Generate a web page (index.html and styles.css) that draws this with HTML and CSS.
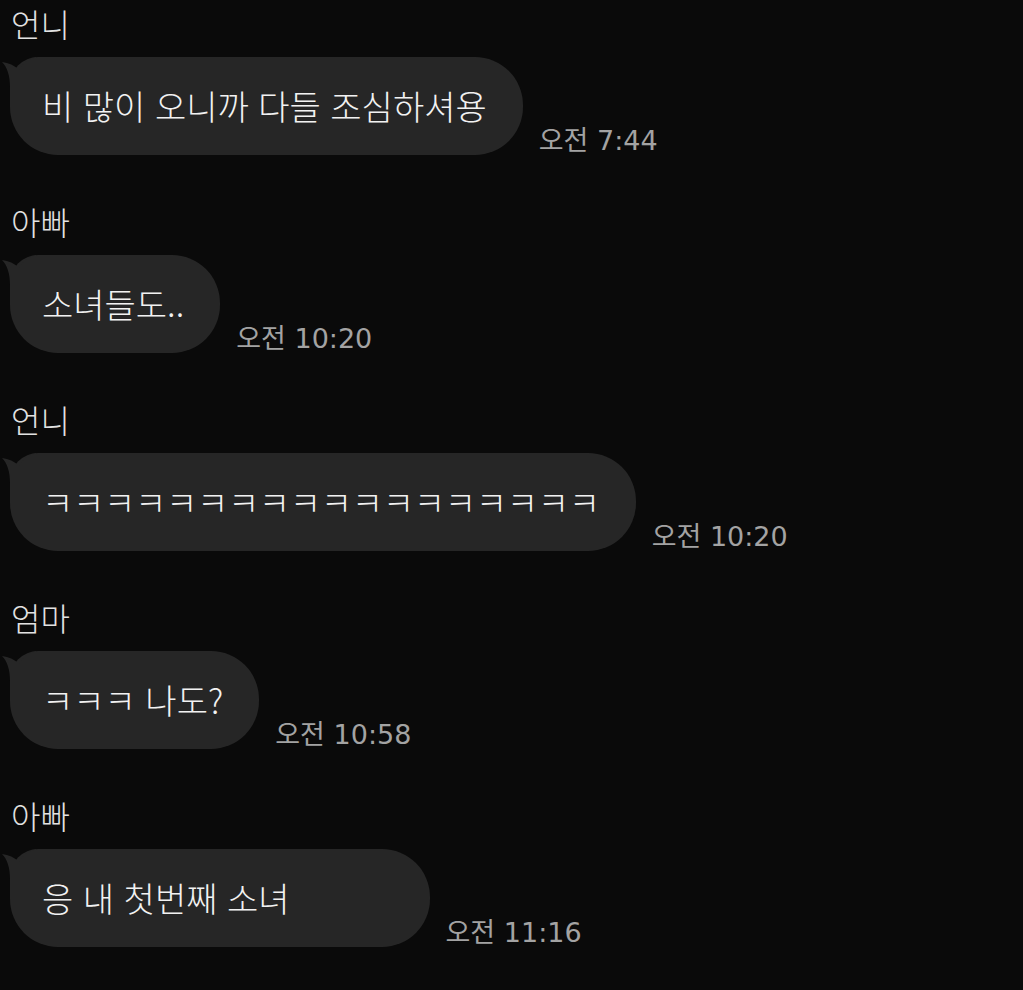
FILE: index.html
```html
<!DOCTYPE html>
<html lang="ko">
<head>
    <meta charset="UTF-8">
    <title>단톡방</title>
    <link rel="stylesheet" href="styles.css">
</head>
<body>

<div class="chat">
    <div class="msg">
        <div class="name">언니</div>
        <div class="row">
            <div class="bubble">
                <svg class="tail" viewBox="-8 0 34 30"><path d="M-8 5 Q2 6 9 13 Q14 3 26 0 L26 30 L0 30 C0 18 -3 10 -8 5 Z"/></svg>
                비 많이 오니까 다들 조심하셔용
            </div>
            <div class="time">오전 7:44</div>
        </div>
    </div>

    <div class="msg">
        <div class="name">아빠</div>
        <div class="row">
            <div class="bubble">
                <svg class="tail" viewBox="-8 0 34 30"><path d="M-8 5 Q2 6 9 13 Q14 3 26 0 L26 30 L0 30 C0 18 -3 10 -8 5 Z"/></svg>
                소녀들도..
            </div>
            <div class="time">오전 10:20</div>
        </div>
    </div>

    <div class="msg">
        <div class="name">언니</div>
        <div class="row">
            <div class="bubble laugh">
                <svg class="tail" viewBox="-8 0 34 30"><path d="M-8 5 Q2 6 9 13 Q14 3 26 0 L26 30 L0 30 C0 18 -3 10 -8 5 Z"/></svg>
                ㅋㅋㅋㅋㅋㅋㅋㅋㅋㅋㅋㅋㅋㅋㅋㅋㅋㅋ
            </div>
            <div class="time">오전 10:20</div>
        </div>
    </div>

    <div class="msg">
        <div class="name">엄마</div>
        <div class="row">
            <div class="bubble">
                <svg class="tail" viewBox="-8 0 34 30"><path d="M-8 5 Q2 6 9 13 Q14 3 26 0 L26 30 L0 30 C0 18 -3 10 -8 5 Z"/></svg>
                ㅋㅋㅋ 나도?
            </div>
            <div class="time">오전 10:58</div>
        </div>
    </div>

    <div class="msg">
        <div class="name">아빠</div>
        <div class="row">
            <div class="bubble wide">
                <svg class="tail" viewBox="-8 0 34 30"><path d="M-8 5 Q2 6 9 13 Q14 3 26 0 L26 30 L0 30 C0 18 -3 10 -8 5 Z"/></svg>
                응 내 첫번째 소녀
            </div>
            <div class="time">오전 11:16</div>
        </div>
    </div>
</div>

</body>
</html>
```

FILE: styles.css
```css
body {
    margin: 0;
    background-color: #0a0a0a;
    font-family: "Noto Sans CJK KR", "Noto Sans", sans-serif;
    font-weight: 300;
    color: #f2f2f2;
}
.chat {
    padding: 3px 0 0 10px;
}
.msg {
    margin-bottom: 46px;
}
.name {
    font-size: 32px;
    line-height: 40px;
    height: 40px;
    margin: 0 0 14px 1px;
    color: #e2e2e2;
}
.row {
    display: flex;
    align-items: flex-end;
}
.bubble {
    position: relative;
    background-color: #262626;
    border-radius: 28px 48px 48px 48px;
    padding: 29px 36px 29px 32px;
    font-size: 34px;
    line-height: 40px;
    white-space: nowrap;
}
.bubble.laugh {
    letter-spacing: -0.3px;
}
.bubble.wide {
    padding-right: 140px;
}
.tail {
    position: absolute;
    left: -8px;
    top: 0;
    width: 34px;
    height: 30px;
    fill: #262626;
}
.time {
    margin-left: 16px;
    margin-bottom: -2px;
    font-family: "DejaVu Sans", "Noto Sans CJK KR", sans-serif;
    font-weight: 400;
    font-size: 27px;
    line-height: 32px;
    color: #a3a3a3;
    white-space: nowrap;
}
```
